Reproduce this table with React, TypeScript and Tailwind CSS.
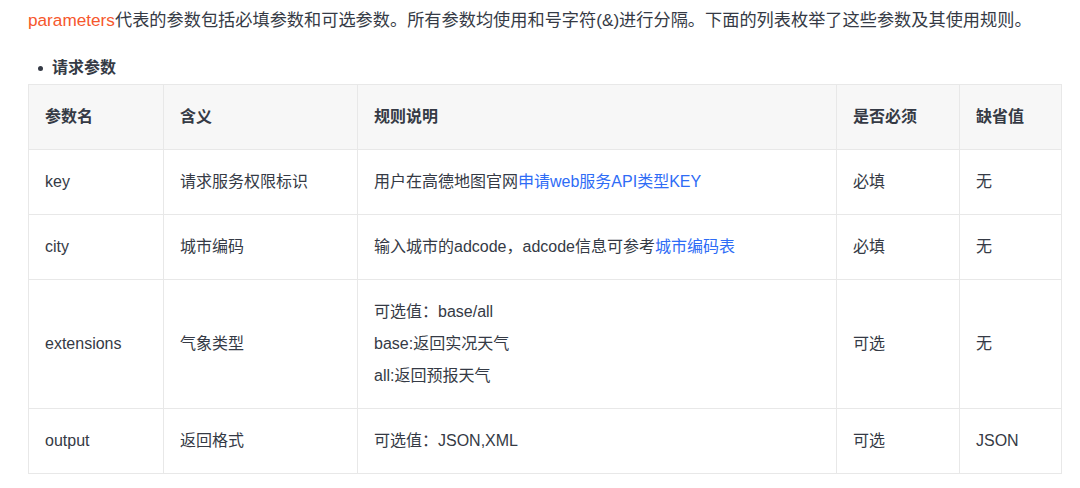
import React from "react"

const rows = [
  {
    name: "key",
    meaning: "请求服务权限标识",
    rule: (
      <>
        用户在高德地图官网<span className="text-[#2e6cf6]">申请web服务API类型KEY</span>
      </>
    ),
    required: "必填",
    def: "无",
  },
  {
    name: "city",
    meaning: "城市编码",
    rule: (
      <>
        输入城市的adcode，adcode信息可参考<span className="text-[#2e6cf6]">城市编码表</span>
      </>
    ),
    required: "必填",
    def: "无",
  },
  {
    name: "extensions",
    meaning: "气象类型",
    rule: (
      <>
        <div>可选值：base/all</div>
        <div>base:返回实况天气</div>
        <div>all:返回预报天气</div>
      </>
    ),
    required: "可选",
    def: "无",
  },
  {
    name: "output",
    meaning: "返回格式",
    rule: <>可选值：JSON,XML</>,
    required: "可选",
    def: "JSON",
  },
]

export default function App() {
  return (
    <div
      className="w-[1080px] h-[488px] bg-white text-[#353a45] overflow-hidden"
      style={{ fontFamily: '"Liberation Sans", "Noto Sans CJK SC", sans-serif' }}
    >
      <p className="pl-[28px] pt-[6px] text-[17.2px] leading-[28px]">
        <span className="text-[#f6572c]">parameters</span>
        代表的参数包括必填参数和可选参数。所有参数均使用和号字符(&amp;)进行分隔。下面的列表枚举了这些参数及其使用规则。
      </p>

      <div className="flex items-center mt-[22px] h-[24px] pl-[38px]">
        <div className="w-[5px] h-[5px] rounded-full bg-[#353a45]" />
        <span className="ml-[9px] text-[16px] font-bold">请求参数</span>
      </div>

      <table className="ml-[28px] mt-[4px] w-[1033px] table-fixed border-collapse text-[16px] leading-[32px]">
        <colgroup>
          <col className="w-[135px]" />
          <col className="w-[194px]" />
          <col className="w-[479px]" />
          <col className="w-[123px]" />
          <col className="w-[102px]" />
        </colgroup>
        <thead>
          <tr className="bg-[#f7f7f7]">
            {["参数名", "含义", "规则说明", "是否必须", "缺省值"].map((h) => (
              <th key={h} className="border border-[#e8e8e8] px-[16px] py-[16px] text-left font-bold">
                {h}
              </th>
            ))}
          </tr>
        </thead>
        <tbody>
          {rows.map((r) => (
            <tr key={r.name}>
              <td className="border border-[#e8e8e8] px-[16px] py-[16px]">{r.name}</td>
              <td className="border border-[#e8e8e8] px-[16px] py-[16px]">{r.meaning}</td>
              <td className="border border-[#e8e8e8] px-[16px] py-[16px]">{r.rule}</td>
              <td className="border border-[#e8e8e8] px-[16px] py-[16px]">{r.required}</td>
              <td className="border border-[#e8e8e8] px-[16px] py-[16px]">{r.def}</td>
            </tr>
          ))}
        </tbody>
      </table>
    </div>
  )
}
